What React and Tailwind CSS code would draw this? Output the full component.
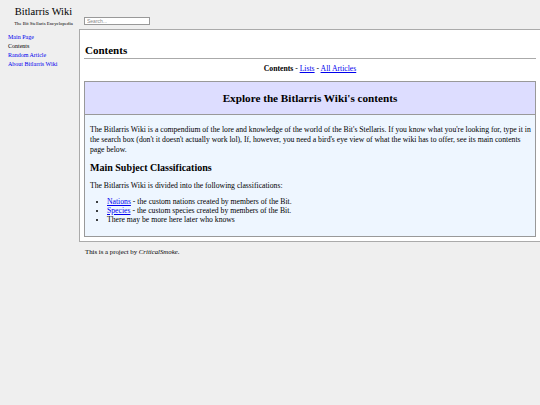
export default function App() {
  return (
    <div className="min-h-[405px] w-[540px] bg-[#efefef] font-['Liberation_Serif',serif] text-black">
      <div className="flex">
        {/* Sidebar */}
        <div className="w-[79px] shrink-0">
          <div className="pt-[5px] pl-[8px] text-center">
            <div className="text-[10.5px] leading-[14px]">Bitlarris Wiki</div>
            <div className="mt-[1px] text-[4.8px] leading-[7px]">The Bit Stellaris Encyclopedia</div>
          </div>
          <ul className="mt-[6px] pl-[8px] text-[6px] leading-[9px]">
            <li><a href="#" className="text-[#0000ee]">Main Page</a></li>
            <li>Contents</li>
            <li><a href="#" className="text-[#0000ee]">Random Article</a></li>
            <li><a href="#" className="text-[#0000ee]">About Bitlarris Wiki</a></li>
          </ul>
        </div>

        {/* Main column */}
        <div className="flex-1">
          <div className="flex h-[29px] items-start pt-[17px] pl-[5px]">
            <input
              placeholder="Search..."
              className="h-[8px] w-[66px] border border-[#999] bg-white px-[2px] text-[5px] font-['Liberation_Sans',sans-serif] placeholder:text-[#888]"
            />
          </div>
          <div className="border border-r-0 border-[#aaa] bg-white px-[4px] pb-[4px]">
            <h1 className="mt-[13px] border-b border-[#aaa] pb-[1px] pl-[1px] text-[11px] font-bold leading-[14px]">Contents</h1>
            <p className="mt-[5px] text-center text-[7.7px] leading-[10px]">
              <b>Contents</b> - <a href="#" className="text-[#0000ee] underline">Lists</a> - <a href="#" className="text-[#0000ee] underline">All Articles</a>
            </p>
            <div className="mt-[7px] border border-[#999]">
              <div className="flex h-[33px] items-center justify-center border-b border-[#999] bg-[#ddddff]">
                <h2 className="text-[11.2px] font-bold">Explore the Bitlarris Wiki's contents</h2>
              </div>
              <div className="bg-[#eef6ff] pl-[5px] pr-[3px] pt-[10px] pb-[12px] text-[7.7px] leading-[10px]">
                <p>
                  The Bitlarris Wiki is a compendium of the lore and knowledge of the world of the Bit's Stellaris. If you know what you're looking for, type it in the search box (don't it doesn't actually work lol), If, however, you need a bird's eye view of what the wiki has to offer, see its main contents page below.
                </p>
                <h3 className="mt-[7px] text-[10px] font-bold leading-[12px]">Main Subject Classifications</h3>
                <p className="mt-[7px]">The Bitlarris Wiki is divided into the following classifications:</p>
                <ul className="mt-[6px] list-disc pl-[17px] leading-[9px]">
                  <li><a href="#" className="text-[#0000ee] underline">Nations</a> - the custom nations created by members of the Bit.</li>
                  <li><a href="#" className="text-[#0000ee] underline">Species</a> - the custom species created by members of the Bit.</li>
                  <li>There may be more here later who knows</li>
                </ul>
              </div>
            </div>
          </div>
          <p className="mt-[6px] pl-[6px] text-[6.8px] leading-[8px]">
            This is a project by <i>CriticalSmoke</i>.
          </p>
        </div>
      </div>
    </div>
  );
}
